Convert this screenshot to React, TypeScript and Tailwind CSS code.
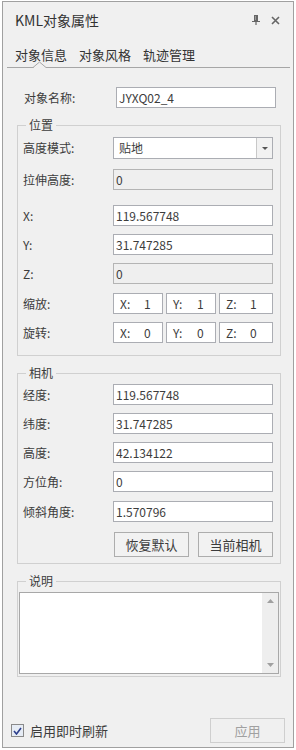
import type { ReactNode } from "react"

const field =
  "h-[21px] w-[160px] border border-[#abadb3] bg-white px-[2px] text-[12px] text-[#3c3c3c] outline-none"
const fieldOff =
  "h-[21px] w-[160px] border border-[#b4b4b4] bg-[#efefef] px-[2px] text-[12px] text-[#3c3c3c] outline-none"

function Row({ label, children, className = "" }: { label: string; children: ReactNode; className?: string }) {
  return (
    <div className={`flex items-center ${className}`}>
      <span className="w-[95px] shrink-0 pl-[5px]">{label}</span>
      {children}
    </div>
  )
}

function Group({ title, children, className = "" }: { title: string; children: ReactNode; className?: string }) {
  return (
    <fieldset className={`ml-[14px] w-[264px] border border-[#d0d0d0] px-0 ${className}`}>
      <legend className="ml-[8px] px-[3px] text-[12px] leading-[18px]">{title}</legend>
      {children}
    </fieldset>
  )
}

function Triple({ values }: { values: string[] }) {
  const axes = ["X:", "Y:", "Z:"]
  return (
    <div className="flex gap-[3px]">
      {axes.map((axis, i) => (
        <div
          key={axis}
          className={`flex h-[21px] items-center border border-[#abadb3] bg-white ${i === 2 ? "w-[54px]" : "w-[50px]"}`}
        >
          <span className="w-[30px] pl-[6px]">{axis}</span>
          <span>{values[i]}</span>
        </div>
      ))}
    </div>
  )
}

export default function App() {
  return (
    <div className="h-[750px] w-[296px] bg-white pl-[2px] pt-px font-['Noto_Sans_CJK_SC',sans-serif] text-[12px] text-[#3c3c3c]">
      <div className="flex h-[747px] w-[292px] flex-col border border-[#a0a0a0] bg-[#f0f0f0]">
        {/* title bar */}
        <div className="flex h-[36px] shrink-0 items-center pl-[12px] pr-[13px]">
          <span className="flex-1 text-[14px] text-[#333]">KML对象属性</span>
          <div className="flex items-center gap-[11px]">
            <svg width="8" height="10" viewBox="0 0 8 10" className="text-[#666]">
              <rect x="2" y="0" width="4" height="6" fill="currentColor" />
              <rect x="3" y="1" width="1" height="4" fill="#9a9a9a" />
              <path d="M0 6.5h8" stroke="currentColor" />
              <path d="M4 6v4" stroke="currentColor" strokeWidth="1.2" />
            </svg>
            <svg width="9" height="9" viewBox="0 0 9 9" className="text-[#666]">
              <path d="M1 1l7 7M8 1l-7 7" stroke="currentColor" strokeWidth="1.6" />
            </svg>
          </div>
        </div>

        {/* tabs */}
        <div className="relative ml-[4px] mr-[3px] flex h-[30px] shrink-0 gap-[12px] border-b border-[#a6a6a6] pl-[8px] pt-[8px] text-[13px] leading-[18px] text-[#333]">
          <span>对象信息</span>
          <span>对象风格</span>
          <span>轨迹管理</span>
          <svg width="14" height="7" viewBox="0 0 14 7" className="absolute bottom-[-1px] left-[26px]">
            <rect x="1" y="5" width="12" height="2" fill="#f0f0f0" />
            <path d="M0 6.5L6.5 1 13 6.5" fill="#f0f0f0" stroke="#a6a6a6" />
          </svg>
        </div>

        {/* name */}
        <div className="mt-[19px] flex shrink-0 items-center pl-[21px]">
          <span className="w-[92px]">对象名称:</span>
          <input readOnly value="JYXQ02_4" className={field} />
        </div>

        <Group title="位置" className="mt-[8px] pb-[12px]">
          <Row label="高度模式:" className="mt-[3px]">
            <div className="flex h-[22px] w-[160px] border border-[#abadb3] bg-white">
              <span className="flex-1 pl-[5px] leading-[20px]">贴地</span>
              <span className="flex w-[16px] items-center justify-center border-l border-[#c8c8c8] bg-[#f2f2f2]">
                <svg width="6" height="3" viewBox="0 0 6 3">
                  <path d="M0 0h6L3 3z" fill="#555" />
                </svg>
              </span>
            </div>
          </Row>
          <Row label="拉伸高度:" className="mt-[10px]">
            <input readOnly value="0" className={fieldOff} />
          </Row>
          <Row label="X:" className="mt-[15px]">
            <input readOnly value="119.567748" className={field} />
          </Row>
          <Row label="Y:" className="mt-[8px]">
            <input readOnly value="31.747285" className={field} />
          </Row>
          <Row label="Z:" className="mt-[8px]">
            <input readOnly value="0" className={fieldOff} />
          </Row>
          <Row label="缩放:" className="mt-[9px]">
            <Triple values={["1", "1", "1"]} />
          </Row>
          <Row label="旋转:" className="mt-[8px]">
            <Triple values={["0", "0", "0"]} />
          </Row>
        </Group>

        <Group title="相机" className="mt-[8px] pb-[6px]">
          <Row label="经度:" className="mt-[2px]">
            <input readOnly value="119.567748" className={field} />
          </Row>
          <Row label="纬度:" className="mt-[8px]">
            <input readOnly value="31.747285" className={field} />
          </Row>
          <Row label="高度:" className="mt-[8px]">
            <input readOnly value="42.134122" className={field} />
          </Row>
          <Row label="方位角:" className="mt-[8px]">
            <input readOnly value="0" className={field} />
          </Row>
          <Row label="倾斜角度:" className="mt-[9px]">
            <input readOnly value="1.570796" className={field} />
          </Row>
          <div className="mt-[10px] flex gap-[9px] pl-[96px]">
            <button type="button" className="h-[25px] w-[75px] border border-[#adadad] bg-[#f2f2f2] text-[13px]">
              恢复默认
            </button>
            <button type="button" className="h-[25px] w-[75px] border border-[#adadad] bg-[#f2f2f2] text-[13px]">
              当前相机
            </button>
          </div>
        </Group>

        <Group title="说明" className="mt-[8px] pb-[2px]">
          <div className="mx-px mt-[2px] flex h-[82px] border border-[#a8a8a8] bg-white">
            <div className="flex-1" />
            <div className="flex w-[16px] flex-col items-center justify-between bg-[#eeeeee] py-[6px]">
              <svg width="7" height="4" viewBox="0 0 7 4">
                <path d="M0 4h7L3.5 0z" fill="#a0a0a0" />
              </svg>
              <svg width="7" height="4" viewBox="0 0 7 4">
                <path d="M0 0h7L3.5 4z" fill="#a0a0a0" />
              </svg>
            </div>
          </div>
        </Group>

        <div className="flex-1" />

        {/* footer */}
        <div className="mb-[4px] flex h-[25px] shrink-0 items-center pl-[8px] pr-[8px]">
          <div className="flex h-[13px] w-[13px] items-center justify-center border border-[#8a8a8a] bg-[#e6ecf5]">
            <svg width="9" height="8" viewBox="0 0 9 8">
              <path d="M1 4l2.5 3L8 1" fill="none" stroke="#2c3e8c" strokeWidth="1.6" />
            </svg>
          </div>
          <span className="ml-[6px] flex-1 text-[13px]">启用即时刷新</span>
          <button type="button" className="h-[25px] w-[75px] border border-[#cfcfcf] bg-[#f0f0f0] text-[13px] text-[#a0a0a0]">
            应用
          </button>
        </div>
      </div>
    </div>
  )
}
